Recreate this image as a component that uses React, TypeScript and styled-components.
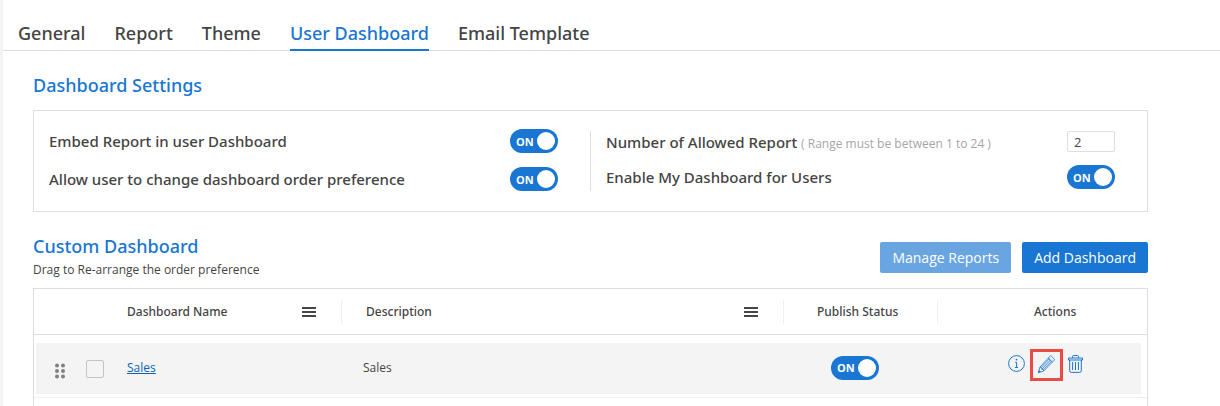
import React, { useState } from 'react';
import styled, { createGlobalStyle } from 'styled-components';

const blue = '#1976d2';
const ink = '#444';
const line = '#dedede';
const mediumFont = "'Noto Sans', 'Open Sans', sans-serif";

const GlobalStyle = createGlobalStyle`
  *, *::before, *::after { box-sizing: border-box; }
  body {
    margin: 0;
    background: #fff;
    color: ${ink};
    font-family: 'Open Sans', 'Noto Sans', sans-serif;
    font-size: 12px;
  }
  button, input { font-family: inherit; }
`;

const Page = styled.div`
  display: flex;
  flex-direction: column;
  min-height: 100vh;
  border-left: 3px solid #f4f4f4;
`;

const Tabs = styled.nav`
  display: flex;
  gap: 29px;
  padding: 21px 15px 0;
  border-bottom: 1px solid ${line};
`;

const Tab = styled.a<{ $active?: boolean }>`
  margin-bottom: -1px;
  padding-bottom: 4px;
  border-bottom: 2px solid ${(p) => (p.$active ? blue : 'transparent')};
  color: ${(p) => (p.$active ? blue : ink)};
  font-family: ${mediumFont};
  font-size: 18px;
  font-weight: 500;
  line-height: 24px;
  text-decoration: none;
  white-space: nowrap;
`;

const Content = styled.main`
  display: flex;
  flex: 1;
  flex-direction: column;
  padding: 22px 72px 0 30px;
`;

const Heading = styled.h2`
  margin: 0;
  color: ${blue};
  font-family: ${mediumFont};
  font-size: 18px;
  font-weight: 500;
  line-height: 24px;
`;

const Panel = styled.section`
  display: grid;
  grid-template-columns: 1fr 1fr;
  margin-top: 13px;
  padding: 18px 1px 20px 0;
  border: 1px solid ${line};
`;

const SettingsColumn = styled.div`
  display: flex;
  flex-direction: column;
  gap: 14px;
  padding: 0 32px 0 15px;

  & + & {
    margin-top: 2px;
    padding-right: 31px;
    border-left: 1px solid ${line};
    gap: 13px;
  }
`;

const Setting = styled.div`
  display: flex;
  align-items: center;
  justify-content: space-between;
`;

const SettingLabel = styled.label`
  font-family: ${mediumFont};
  font-size: 15px;
  font-weight: 500;
  line-height: 20px;
`;

const Hint = styled.span`
  color: #a6a6a6;
  font-family: 'Open Sans', sans-serif;
  font-size: 12px;
  font-weight: 400;
  line-height: 12px;
`;

const NumberBox = styled.input`
  width: 48px;
  height: 21px;
  padding: 0 6px;
  border: 1px solid ${line};
  border-radius: 2px;
  color: ${ink};
  font-size: 13px;
`;

const Switch = styled.span`
  position: relative;
  display: inline-flex;
  flex: none;
  width: 48px;
  height: 24px;
`;

const SwitchInput = styled.input`
  position: absolute;
  inset: 0;
  width: 100%;
  height: 100%;
  margin: 0;
  opacity: 0;
  cursor: pointer;
`;

const Track = styled.span<{ $on: boolean }>`
  display: flex;
  flex: 1;
  flex-direction: ${(p) => (p.$on ? 'row' : 'row-reverse')};
  align-items: center;
  justify-content: space-between;
  padding: 0 3px 0 6px;
  border-radius: 12px;
  background: ${(p) => (p.$on ? blue : '#9e9e9e')};
  color: #fff;
  font-size: 11px;
  font-weight: 700;
`;

const Knob = styled.span`
  width: 18px;
  height: 18px;
  border-radius: 50%;
  background: #fff;
`;

const ListHeader = styled.header`
  display: flex;
  align-items: flex-start;
  justify-content: space-between;
  margin: 22px 0 10px;
`;

const SubTitle = styled.p`
  margin: 4px 0 0;
  line-height: 16px;
`;

const ButtonGroup = styled.div`
  display: flex;
  gap: 11px;
  padding-top: 8px;
`;

const Button = styled.button`
  height: 31px;
  padding: 0 12px;
  border: 0;
  border-radius: 2px;
  background: ${blue};
  color: #fff;
  font-size: 14px;
  font-weight: 500;
  cursor: pointer;

  &:disabled {
    opacity: 0.65;
    cursor: default;
  }
`;

const Grid = styled.div`
  flex: 1;
  border: 1px solid ${line};
  border-bottom: 0;
`;

const Table = styled.table`
  width: 100%;
  border-spacing: 0;
  table-layout: fixed;
`;

const Col = styled.col<{ $width?: number }>`
  width: ${(p) => (p.$width ? `${p.$width}px` : 'auto')};
`;

const Th = styled.th`
  height: 46px;
  padding: 0;
  border-bottom: 1px solid ${line};
  font-family: ${mediumFont};
  font-weight: 500;
`;

const HeadCell = styled.div<{ $pad?: number; $divider?: boolean }>`
  display: flex;
  align-items: center;
  justify-content: space-between;
  height: 24px;
  padding: 0 25px 0 ${(p) => p.$pad ?? 0}px;
  border-right: ${(p) => (p.$divider ? '1px solid #f0f0f0' : '0')};
`;

const MenuButton = styled.button`
  display: flex;
  padding: 0;
  border: 0;
  background: none;
  color: #464646;
  cursor: pointer;
`;

const Td = styled.td`
  height: 63px;
  padding: 8px 0 3px;
  border-bottom: 1px solid #f0f0f0;
  background: #f4f4f4;
  background-clip: content-box;

  &:first-child { padding-left: 2px; }
  &:last-child { padding-right: 6px; }
`;

const Cell = styled.div<{ $pad?: number; $gap?: number }>`
  display: flex;
  align-items: center;
  gap: ${(p) => p.$gap ?? 0}px;
  height: 51px;
  padding: 0 0 2px ${(p) => p.$pad ?? 0}px;
`;

const ActionCell = styled(Cell)`
  padding-bottom: 8px;
`;

const DragHandle = styled.svg`
  margin-top: 6px;
  fill: #808080;
`;

const CheckBox = styled.input`
  width: 18px;
  height: 18px;
  margin: 3px 0 0;
  border: 1px solid #c4c4c4;
  border-radius: 2px;
  appearance: none;

  &:checked { background: ${blue}; }
`;

const NameLink = styled.a`
  color: #0b62b5;
  text-decoration: underline;
`;

const IconButton = styled.button<{ $highlighted?: boolean }>`
  display: flex;
  align-items: center;
  justify-content: center;
  padding: ${(p) => (p.$highlighted ? '3px 5px 5px' : '0 0 2px')};
  border: ${(p) => (p.$highlighted ? '3px solid #e94b45' : '0')};
  background: none;
  color: ${blue};
  cursor: pointer;

  svg {
    fill: none;
    stroke: currentColor;
  }
`;

function Toggle({ id, label }: { id: string; label?: string }) {
  const [on, setOn] = useState(true);
  return (
    <Switch>
      <SwitchInput
        id={id}
        type="checkbox"
        role="switch"
        aria-label={label}
        checked={on}
        onChange={(e) => setOn(e.target.checked)}
      />
      <Track $on={on} aria-hidden="true">
        {on ? 'ON' : 'OFF'}
        <Knob />
      </Track>
    </Switch>
  );
}

function ColumnMenu({ label }: { label: string }) {
  return (
    <MenuButton type="button" aria-label={label}>
      <svg width="14" height="10" viewBox="0 0 14 10">
        <path fill="currentColor" d="M0 0h14v2H0zM0 4h14v2H0zM0 8h14v2H0z" />
      </svg>
    </MenuButton>
  );
}

const InfoIcon = () => (
  <svg width="17" height="17" viewBox="0 0 17 17" strokeWidth="1">
    <circle cx="8.5" cy="8.5" r="7.9" />
    <path d="M7.2 7.3h1.4v5M7 12.5h3" />
    <circle cx="8.5" cy="4.6" r="0.9" fill="currentColor" stroke="none" />
  </svg>
);

const PencilIcon = () => (
  <svg width="17" height="18" viewBox="0 0 17 18" strokeWidth="0.8" strokeLinejoin="round">
    <path d="M0.5 17.4 1.9 12.2 11.8 1.3Q12.6 0.5 13.4 1.2L16 3.7Q16.8 4.5 16 5.4L5.6 16.1Z" />
    <path d="M1.9 12.2 3.3 12.4 3.8 14.2 5.4 14.5 5.6 16.1M3.3 12.4 11.8 3.3M3.8 14.2 12.8 4.6M5.4 14.5 14.1 5.6M10.2 3.1 14.2 7.2" />
    <path d="M0.5 17.4 1 15.6 2.3 16.9Z" fill="currentColor" />
  </svg>
);

const TrashIcon = () => (
  <svg width="15" height="18" viewBox="0 0 15 18" strokeWidth="1">
    <path d="M0.5 3h14v2H0.5zM4.5 3V1.5Q4.5 0.5 5.5 0.5h4q1 0 1 1V3" />
    <path d="M1.7 5v10.8q0 1.6 1.6 1.6h8.4q1.6 0 1.6-1.6V5M4.6 7v8M7.5 7v8M10.4 7v8" />
  </svg>
);

const tabs = ['General', 'Report', 'Theme', 'User Dashboard', 'Email Template'];

export default function App() {
  return (
    <>
      <GlobalStyle />
      <Page>
        <Tabs>
          {tabs.map((tab) => (
            <Tab key={tab} href="#" $active={tab === 'User Dashboard'}>
              {tab}
            </Tab>
          ))}
        </Tabs>
        <Content>
          <Heading>Dashboard Settings</Heading>
          <Panel>
            <SettingsColumn>
              <Setting>
                <SettingLabel htmlFor="embed">Embed Report in user Dashboard</SettingLabel>
                <Toggle id="embed" />
              </Setting>
              <Setting>
                <SettingLabel htmlFor="order">Allow user to change dashboard order preference</SettingLabel>
                <Toggle id="order" />
              </Setting>
            </SettingsColumn>
            <SettingsColumn>
              <Setting>
                <SettingLabel htmlFor="allowed">
                  Number of Allowed Report <Hint>( Range must be between 1 to 24 )</Hint>
                </SettingLabel>
                <NumberBox id="allowed" type="text" inputMode="numeric" defaultValue="2" />
              </Setting>
              <Setting>
                <SettingLabel htmlFor="enable">Enable My Dashboard for Users</SettingLabel>
                <Toggle id="enable" />
              </Setting>
            </SettingsColumn>
          </Panel>

          <ListHeader>
            <div>
              <Heading>Custom Dashboard</Heading>
              <SubTitle>Drag to Re-arrange the order preference</SubTitle>
            </div>
            <ButtonGroup>
              <Button type="button" disabled>Manage Reports</Button>
              <Button type="button">Add Dashboard</Button>
            </ButtonGroup>
          </ListHeader>

          <Grid>
            <Table>
              <colgroup>
                <Col $width={93} />
                <Col $width={215} />
                <Col />
                <Col $width={154} />
                <Col $width={209} />
              </colgroup>
              <thead>
                <tr>
                  <Th aria-label="Select" />
                  <Th>
                    <HeadCell $divider>
                      Dashboard Name
                      <ColumnMenu label="Dashboard Name options" />
                    </HeadCell>
                  </Th>
                  <Th>
                    <HeadCell $pad={24} $divider>
                      Description
                      <ColumnMenu label="Description options" />
                    </HeadCell>
                  </Th>
                  <Th>
                    <HeadCell $pad={33} $divider>Publish Status</HeadCell>
                  </Th>
                  <Th>
                    <HeadCell $pad={96}>Actions</HeadCell>
                  </Th>
                </tr>
              </thead>
              <tbody>
                <tr>
                  <Td>
                    <Cell $pad={19} $gap={20}>
                      <DragHandle width="11" height="16" viewBox="0 0 11 16" aria-hidden="true">
                        {[2, 8].map((x) =>
                          [2.5, 8, 13.5].map((y) => <circle key={`${x}-${y}`} cx={x} cy={y} r="2" />),
                        )}
                      </DragHandle>
                      <CheckBox type="checkbox" aria-label="Select Sales" />
                    </Cell>
                  </Td>
                  <Td>
                    <Cell><NameLink href="#">Sales</NameLink></Cell>
                  </Td>
                  <Td>
                    <Cell $pad={21}>Sales</Cell>
                  </Td>
                  <Td>
                    <Cell $pad={47}><Toggle id="publish" label="Publish Sales" /></Cell>
                  </Td>
                  <Td>
                    <ActionCell $pad={70} $gap={5}>
                      <IconButton type="button" aria-label="Information"><InfoIcon /></IconButton>
                      <IconButton type="button" aria-label="Edit" $highlighted><PencilIcon /></IconButton>
                      <IconButton type="button" aria-label="Delete"><TrashIcon /></IconButton>
                    </ActionCell>
                  </Td>
                </tr>
              </tbody>
            </Table>
          </Grid>
        </Content>
      </Page>
    </>
  );
}
